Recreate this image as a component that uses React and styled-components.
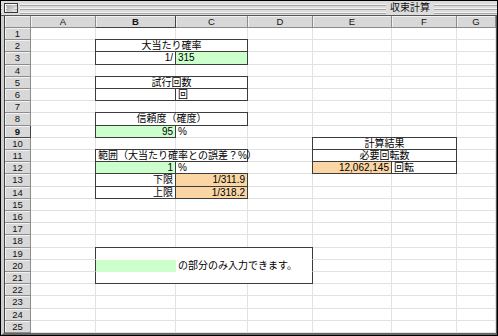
import React from "react"
import styled, { createGlobalStyle, css } from "styled-components"

const GRID = "#e2e2e2"
const DARK = "#3c3c3c"
const GREEN = "#ccffcc"
const PEACH = "#f9d6a4"

const COLS = ["A", "B", "C", "D", "E", "F", "G"]
const ROWS = Array.from({ length: 25 }, (_, i) => i + 1)

// every cell that carries a value or a border, by sheet position
const CELLS = [
  { r: 2, c: 2, span: 2, b: "tlrb", align: "center", text: "大当たり確率" },
  { r: 3, c: 2, b: "lrb", align: "right", text: "1/" },
  { r: 3, c: 3, b: "rb", bg: GREEN, text: "315" },
  { r: 5, c: 2, span: 2, b: "tlrb", align: "center", text: "試行回数" },
  { r: 6, c: 2, b: "lrb", text: "" },
  { r: 6, c: 3, b: "rb", text: "回" },
  { r: 8, c: 2, span: 2, b: "tlrb", align: "center", text: "信頼度（確度）" },
  { r: 9, c: 2, b: "lrb", bg: GREEN, align: "right", text: "95" },
  { r: 9, c: 3, text: "%" },
  { r: 11, c: 2, span: 2, b: "tlrb", text: "範囲（大当たり確率との誤差？%）" },
  { r: 12, c: 2, b: "lrb", bg: GREEN, align: "right", text: "1" },
  { r: 12, c: 3, text: "%" },
  { r: 13, c: 2, b: "tlrb", align: "right", text: "下限" },
  { r: 13, c: 3, b: "trb", bg: PEACH, align: "right", text: "1/311.9" },
  { r: 14, c: 2, b: "lrb", align: "right", text: "上限" },
  { r: 14, c: 3, b: "rb", bg: PEACH, align: "right", text: "1/318.2" },
  { r: 10, c: 5, span: 2, b: "tlrb", align: "center", text: "計算結果" },
  { r: 11, c: 5, span: 2, b: "lrb", align: "center", text: "必要回転数" },
  { r: 12, c: 5, b: "lrb", bg: PEACH, align: "right", text: "12,062,145" },
  { r: 12, c: 6, b: "rb", text: "回転" },
  { r: 19, c: 2, span: 3, b: "tlr", flat: true, text: "" },
  { r: 20, c: 2, b: "l", bg: GREEN, flat: true, text: "" },
  { r: 20, c: 3, span: 2, b: "r", flat: true, text: "の部分のみ入力できます。" },
  { r: 21, c: 2, span: 3, b: "lrb", flat: true, text: "" },
]

const GlobalStyle = createGlobalStyle`
  html, body {
    margin: 0;
    padding: 0;
    background: #fff;
  }
  body {
    width: 498px;
    height: 336px;
    overflow: hidden;
    font-family: "Liberation Sans", "Noto Sans CJK JP", sans-serif;
  }
`

const Window = styled.div`
  width: 498px;
  height: 336px;
  box-sizing: border-box;
  border: 1px solid #000;
  background: #dcdcdc;
  display: flex;
  flex-direction: column;
`

const TitleBar = styled.div`
  height: 14px;
  flex: none;
  display: flex;
  align-items: center;
  padding: 0 63px 0 2px;
  border-bottom: 1px solid #555;
  background:
    repeating-linear-gradient(
      to bottom,
      #dcdcdc 0 2px,
      #f2f2f2 2px 3px,
      #a6a6a6 3px 4px
    );
  background-size: 100% 12px;
  background-position: 0 1px;
  background-repeat: no-repeat;
  background-color: #dcdcdc;
`

const CloseBox = styled.div`
  width: 8px;
  height: 8px;
  border: 1px solid #3a3a3a;
  background: linear-gradient(135deg, #9a9a9a, #f0f0f0);
  box-shadow: inset 1px 1px 0 #fff;
  margin-left: 1px;
  padding: 0 2px;
  background-clip: content-box;
  outline: 2px solid #dcdcdc;
`

const Spacer = styled.div`
  flex: 1;
`

const Title = styled.div`
  background: #dcdcdc;
  padding: 0 4px;
  font-size: 10px;
  line-height: 14px;
  color: #111;
`

const Frame = styled.div`
  flex: 1;
  min-height: 0;
  display: flex;
  border-left: 3px solid #cfcfcf;
  border-right: 1px solid #555;
  border-bottom: 2px solid #666;
`

const Sheet = styled.div`
  flex: 1;
  display: grid;
  grid-template-columns: 26px 65px 80px 72px 65px 79px 65px minmax(0, 1fr);
  grid-template-rows: 12px repeat(25, minmax(0, 1fr));
  border-left: 1px solid #444;
  background: #fff;
  overflow: hidden;
  font-size: 10px;
  line-height: 12px;
  color: #000;
`

const Head = styled.div`
  grid-row: ${p => p.$r};
  grid-column: ${p => p.$c};
  background: #d8d8d8;
  border-right: 1px solid #8c8c8c;
  border-bottom: 1px solid #8c8c8c;
  box-shadow: inset 1px 1px 0 #f2f2f2;
  text-align: center;
  font-size: 9.5px;
  line-height: 11px;
  color: #111;
  font-weight: ${p => (p.$active ? 700 : 400)};
  ${p =>
    p.$active &&
    css`
      border-right-color: #444;
      border-bottom-color: #444;
    `}
`

const side = (p, s) => {
  if (p.$b && p.$b.includes(s)) return DARK
  return p.$flat ? "transparent" : GRID
}

const Cell = styled.div`
  grid-row: ${p => p.$r + 1};
  grid-column: ${p => p.$c + 1} / span ${p => p.$span || 1};
  background: ${p => p.$bg || "#fff"};
  border-right: 1px solid ${p => side(p, "r")};
  border-bottom: 1px solid ${p => side(p, "b")};
  ${p =>
    p.$b &&
    p.$b.includes("t") &&
    css`
      border-top: 1px solid ${DARK};
      margin-top: -1px;
    `}
  ${p =>
    p.$b &&
    p.$b.includes("l") &&
    css`
      border-left: 1px solid ${DARK};
      margin-left: -1px;
    `}
  text-align: ${p => p.$align || "left"};
  padding: 1px 2px 0;
  line-height: 10px;
  white-space: nowrap;
  overflow: visible;
  min-width: 0;
  min-height: 0;
  position: relative;
  z-index: ${p => (p.$b ? 1 : 0)};
`

const App = () => {
  const used = new Set()
  CELLS.forEach(d => {
    for (let k = 0; k < (d.span || 1); k++) used.add(`${d.r}-${d.c + k}`)
  })

  return (
    <>
      <GlobalStyle />
      <Window>
        <TitleBar>
          <CloseBox />
          <Spacer />
          <Title>収束計算</Title>
        </TitleBar>
        <Frame>
          <Sheet>
            <Head $r={1} $c={1} />
            {COLS.map((l, i) => (
              <Head key={l} $r={1} $c={i + 2} $active={l === "B"}>
                {l}
              </Head>
            ))}
            {ROWS.map(r => (
              <Head key={`h${r}`} $r={r + 1} $c={1} $active={r === 9}>
                {r}
              </Head>
            ))}
            {ROWS.map(r =>
              COLS.map((_, i) =>
                used.has(`${r}-${i + 1}`) ? null : (
                  <Cell key={`${r}-${i}`} $r={r} $c={i + 1} />
                )
              )
            )}
            {CELLS.map(d => (
              <Cell
                key={`d${d.r}-${d.c}`}
                $r={d.r}
                $c={d.c}
                $span={d.span}
                $b={d.b}
                $bg={d.bg}
                $align={d.align}
                $flat={d.flat}
              >
                {d.text}
              </Cell>
            ))}
          </Sheet>
        </Frame>
      </Window>
    </>
  )
}

export default App
